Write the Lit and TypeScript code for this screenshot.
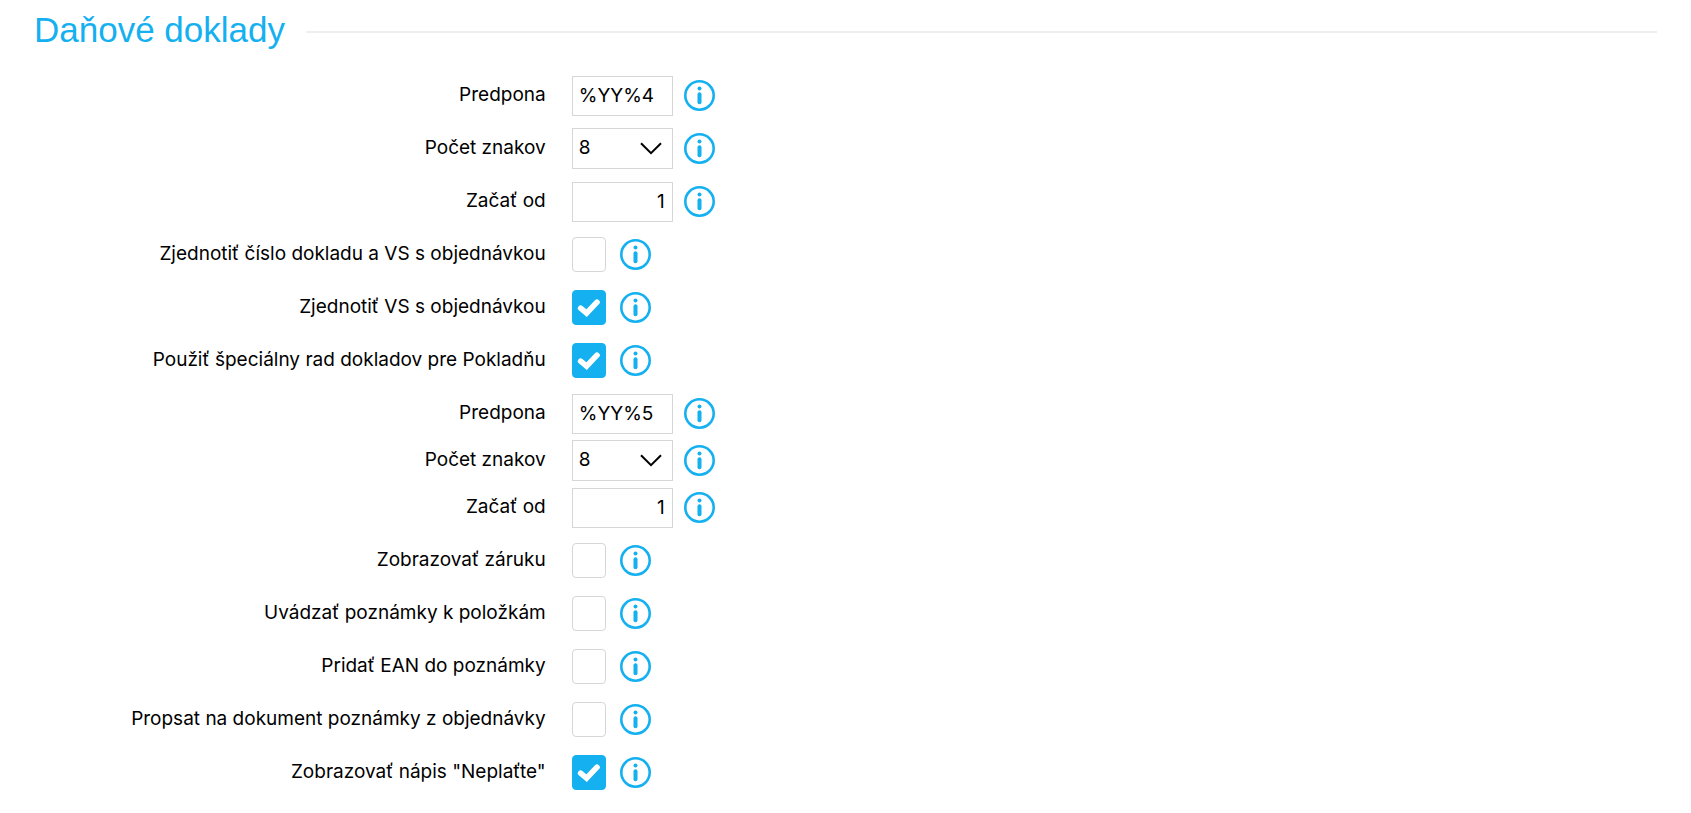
import { LitElement, html, css, nothing } from "lit";
import { customElement, property } from "lit/decorators.js";

type Field =
  | { kind: "text"; id: string; label: string; value: string; numeric?: boolean; tight?: boolean }
  | { kind: "select"; id: string; label: string; value: string; tight?: boolean }
  | { kind: "check"; id: string; label: string; checked: boolean; tight?: boolean };

const FIELDS: Field[] = [
  { kind: "text", id: "prefix", label: "Predpona", value: "%YY%4" },
  { kind: "select", id: "length", label: "Počet znakov", value: "8" },
  { kind: "text", id: "start", label: "Začať od", value: "1", numeric: true },
  { kind: "check", id: "unify-number", label: "Zjednotiť číslo dokladu a VS s objednávkou", checked: false },
  { kind: "check", id: "unify-vs", label: "Zjednotiť VS s objednávkou", checked: true },
  { kind: "check", id: "cash-series", label: "Použiť špeciálny rad dokladov pre Pokladňu", checked: true },
  { kind: "text", id: "cash-prefix", label: "Predpona", value: "%YY%5" },
  { kind: "select", id: "cash-length", label: "Počet znakov", value: "8", tight: true },
  { kind: "text", id: "cash-start", label: "Začať od", value: "1", numeric: true, tight: true },
  { kind: "check", id: "warranty", label: "Zobrazovať záruku", checked: false },
  { kind: "check", id: "item-notes", label: "Uvádzať poznámky k položkám", checked: false },
  { kind: "check", id: "ean", label: "Pridať EAN do poznámky", checked: false },
  { kind: "check", id: "order-notes", label: "Propsat na dokument poznámky z objednávky", checked: false },
  { kind: "check", id: "do-not-pay", label: 'Zobrazovať nápis "Neplaťte"', checked: true },
];

@customElement("info-button")
class InfoButton extends LitElement {
  @property() label = "";

  static styles = css`
    :host {
      display: block;
    }
    .info {
      display: block;
      padding: 0;
      border: 0;
      background: none;
      color: #15b0f0;
      cursor: pointer;
    }
    .icon {
      display: block;
      width: 31px;
      height: 31px;
    }
  `;

  render() {
    return html`
      <button class="info" type="button" aria-label=${"Nápoveda: " + this.label}>
        <svg class="icon" viewBox="0 0 31 31" aria-hidden="true">
          <circle cx="15.5" cy="15.5" r="14.2" fill="none" stroke="currentColor" stroke-width="2.6" />
          <circle cx="15.5" cy="8.6" r="2" fill="currentColor" />
          <path d="M15.5 14.2V22.3" stroke="currentColor" stroke-width="4" stroke-linecap="round" />
        </svg>
      </button>
    `;
  }
}

@customElement("app-root")
class AppRoot extends LitElement {
  static styles = css`
    :host {
      display: block;
      padding: 8px 34px 20px;
      background: #fff;
      color: #000;
      font-family: Inter, "Open Sans", sans-serif;
      font-size: 19px;
      line-height: 24px;
    }
    .heading {
      display: flex;
      align-items: center;
      gap: 21px;
      margin: 0 0 24px;
      color: #15b0f0;
      font-family: "Liberation Sans", Arial, sans-serif;
      font-size: 35px;
      font-weight: 400;
      line-height: 43px;
    }
    .rule {
      flex: 1;
      height: 2px;
      margin-top: 4px;
      background: #eee;
    }
    .form {
      padding-left: 1px;
    }
    .row {
      display: grid;
      grid-template-columns: 32fr 68fr;
      column-gap: 26px;
      align-items: center;
      height: 41px;
      margin-top: 12px;
    }
    .tight {
      margin-top: 6px;
    }
    .label {
      padding-bottom: 1px;
      text-align: right;
    }
    .control {
      display: flex;
      align-items: center;
      gap: 11px;
    }
    .control.check {
      gap: 14px;
    }
    .field {
      box-sizing: border-box;
      width: 101px;
      height: 40px;
      margin: 0;
      padding: 0 7px 1px 6px;
      border: 1px solid #d6d6d6;
      border-radius: 0;
      background: #fff;
      color: inherit;
      font: inherit;
    }
    .numeric {
      text-align: right;
    }
    .stack {
      display: grid;
    }
    .stack > * {
      grid-area: 1 / 1;
    }
    select.field {
      height: 41px;
      appearance: none;
    }
    .chevron {
      align-self: center;
      justify-self: end;
      width: 22px;
      height: 13px;
      margin-right: 11px;
      pointer-events: none;
    }
    .box {
      box-sizing: border-box;
      width: 34px;
      height: 35px;
      margin: 0;
      border: 1px solid #d6d6d6;
      border-radius: 4px;
      background: #fff;
      appearance: none;
    }
    .box:checked {
      border-color: #15b0f0;
      background: #15b0f0;
    }
    .tick {
      place-self: center;
      width: 24px;
      height: 20px;
      pointer-events: none;
      visibility: hidden;
    }
    .box:checked + .tick {
      visibility: visible;
    }
  `;

  private control(f: Field) {
    switch (f.kind) {
      case "text":
        return html`<input id=${f.id} class="field ${f.numeric ? "numeric" : ""}" type="text" .value=${f.value} />`;
      case "select":
        return html`
          <span class="stack">
            <select id=${f.id} class="field">
              <option selected>${f.value}</option>
            </select>
            <svg class="chevron" viewBox="0 0 22 13" aria-hidden="true">
              <path d="M1 1.2L11 11.2L21 1.2" fill="none" stroke="#000" stroke-width="2" />
            </svg>
          </span>
        `;
      case "check":
        return html`
          <span class="stack">
            <input id=${f.id} class="box" type="checkbox" .checked=${f.checked} />
            <svg class="tick" viewBox="0 0 24 20" aria-hidden="true">
              <path
                d="M3.6 10.2L9.6 15.2L20 4.2"
                fill="none"
                stroke="#fff"
                stroke-width="5.6"
                stroke-linecap="round"
              />
            </svg>
          </span>
        `;
      default:
        return nothing;
    }
  }

  render() {
    return html`
      <h1 class="heading">Daňové doklady<span class="rule"></span></h1>
      <form class="form">
        ${FIELDS.map(
          (f) => html`
            <div class="row ${f.tight ? "tight" : ""}">
              <label class="label" for=${f.id}>${f.label}</label>
              <div class="control ${f.kind}">
                ${this.control(f)}
                <info-button .label=${f.label}></info-button>
              </div>
            </div>
          `,
        )}
      </form>
    `;
  }
}
